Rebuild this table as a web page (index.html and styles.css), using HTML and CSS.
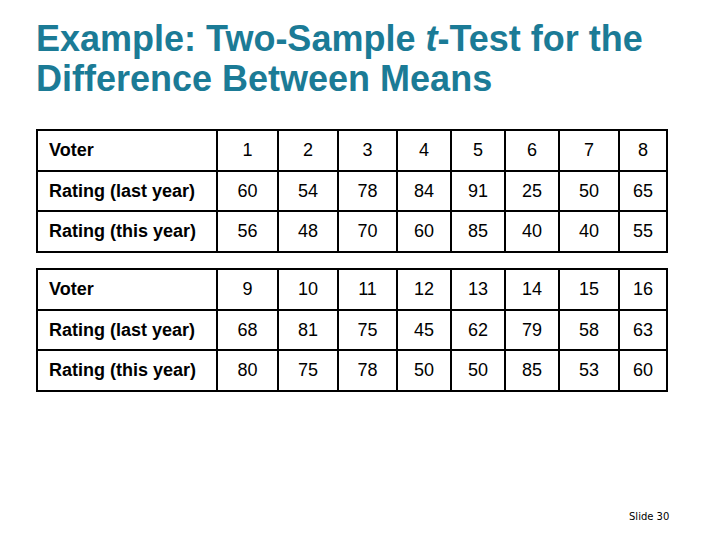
FILE: index.html
```html
<!DOCTYPE html>
<html>
<head>
<meta charset="utf-8">
<link rel="stylesheet" href="styles.css">
</head>
<body>
<div class="slide">
  <h1 class="title">Example: Two-Sample <i>t</i>-Test for the<br>Difference Between Means</h1>
  <table class="data">
    <colgroup>
      <col class="c0"><col class="c1"><col class="c2"><col class="c3"><col class="c4"><col class="c5"><col class="c6"><col class="c7"><col class="c8">
    </colgroup>
    <tr><th>Voter</th><td>1</td><td>2</td><td>3</td><td>4</td><td>5</td><td>6</td><td>7</td><td>8</td></tr>
    <tr><th>Rating (last year)</th><td>60</td><td>54</td><td>78</td><td>84</td><td>91</td><td>25</td><td>50</td><td>65</td></tr>
    <tr><th>Rating (this year)</th><td>56</td><td>48</td><td>70</td><td>60</td><td>85</td><td>40</td><td>40</td><td>55</td></tr>
  </table>
  <table class="data second">
    <colgroup>
      <col class="c0"><col class="c1"><col class="c2"><col class="c3"><col class="c4"><col class="c5"><col class="c6"><col class="c7"><col class="c8">
    </colgroup>
    <tr><th>Voter</th><td>9</td><td>10</td><td>11</td><td>12</td><td>13</td><td>14</td><td>15</td><td>16</td></tr>
    <tr><th>Rating (last year)</th><td>68</td><td>81</td><td>75</td><td>45</td><td>62</td><td>79</td><td>58</td><td>63</td></tr>
    <tr><th>Rating (this year)</th><td>80</td><td>75</td><td>78</td><td>50</td><td>50</td><td>85</td><td>53</td><td>60</td></tr>
  </table>
  <div class="footer">Slide 30</div>
</div>
</body>
</html>
```
FILE: styles.css
```css
html, body {
  margin: 0;
  padding: 0;
  background: #ffffff;
}
.slide {
  width: 720px;
  height: 540px;
  position: relative;
  box-sizing: border-box;
  padding: 19px 0 0 36px;
  font-family: "Liberation Sans", Arial, sans-serif;
}
.title {
  margin: 0;
  font-size: 36px;
  font-weight: bold;
  line-height: 40px;
  color: #1b7b96;
}
.title i {
  font-style: italic;
}
.data {
  border-collapse: collapse;
  table-layout: fixed;
  width: 630px;
  margin-top: 30px;
  font-size: 18px;
  color: #000;
}
.data.second {
  margin-top: 15px;
}
.data th, .data td {
  border: 2px solid #000;
  height: 38.7px;
  padding: 0;
}
.data th {
  text-align: left;
  font-weight: bold;
  padding-left: 11px;
}
.data td {
  text-align: center;
}
.c0 { width: 180px; }
.c1 { width: 61px; }
.c2 { width: 60px; }
.c3 { width: 59px; }
.c4 { width: 54px; }
.c5 { width: 54px; }
.c6 { width: 54px; }
.c7 { width: 60px; }
.c8 { width: 48px; }
.footer {
  position: absolute;
  left: 629px;
  top: 511px;
  font-family: "DejaVu Sans", Verdana, sans-serif;
  font-size: 10px;
  color: #000;
}
```
